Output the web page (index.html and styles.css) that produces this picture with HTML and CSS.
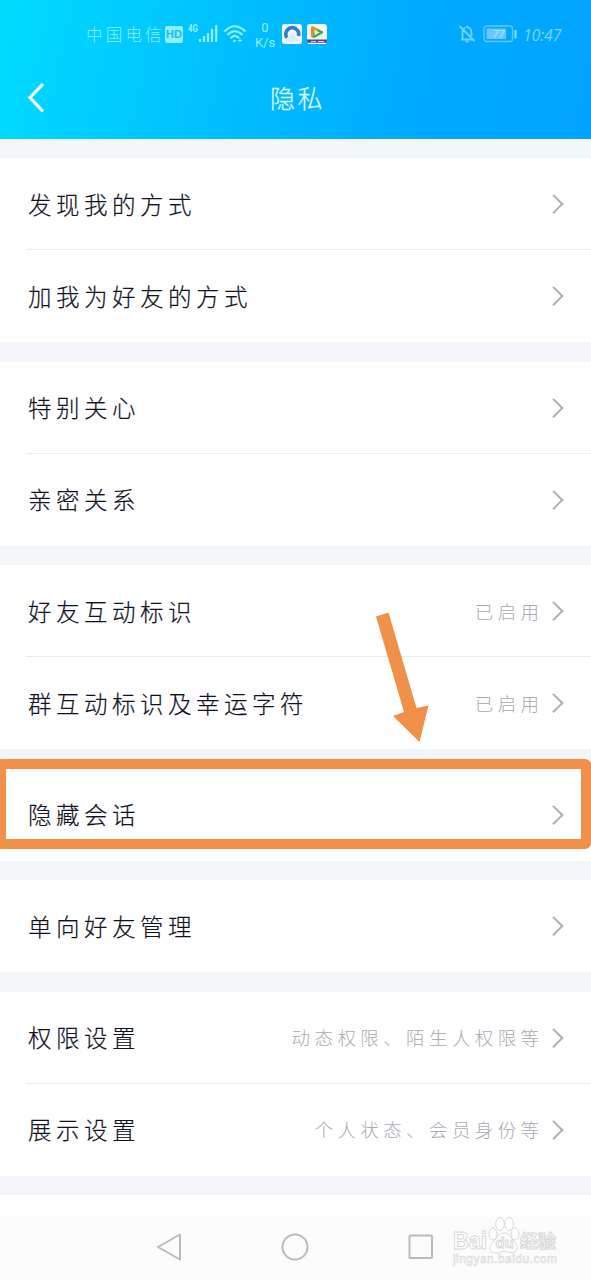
FILE: index.html
```html
<!DOCTYPE html>
<html lang="zh-CN">
<head>
<meta charset="utf-8">
<title>隐私</title>
<link rel="stylesheet" href="styles.css">
</head>
<body>
<div class="screen">
  <header class="header">
    <div class="status">
      <span class="carrier">中国电信</span>
      <span class="hd">HD</span>
      <svg class="net" width="14" height="16" viewBox="0 0 14 16"><text x="1" y="11" class="net-text" textLength="10" lengthAdjust="spacingAndGlyphs">4G</text></svg>
      <svg class="signal" width="20" height="19" viewBox="0 0 20 19" stroke="#8ff1fd" stroke-width="2.2" fill="none"><path d="M2 15v3M6 12v6M10 9v9M14 5v13M18.200 1v17"/></svg>
      <svg class="wifi" width="24" height="20" viewBox="0 0 24 20" fill="none" stroke="#8ff1fd" stroke-width="2.200"><path d="M1.500 7.500Q11.500-3 22.500 7.500M4.500 11Q11.500 3.500 19.500 11M7.500 14.500Q12 9.500 16 14"/><circle cx="11.500" cy="17" r="1.300" fill="#8ff1fd" stroke="none"/><path d="M15 16.500h4M17 14.500v4" stroke-width="1"/></svg>
      <span class="speed"><span>0</span><span>K/s</span></span>
      <svg class="app" width="20" height="20" viewBox="0 0 20 20"><rect width="20" height="20" rx="3" fill="#f1f7fe"/><path d="M5 14A6.500 6.500 0 1 1 16.500 12" fill="none" stroke="#2f7fd6" stroke-width="3.600"/><path d="M4 17.500Q3.500 13 7.500 13Q9 8.500 12.500 11.500Q13 14 16.500 14.500V17.500Z" fill="#dcecfb"/></svg>
      <svg class="app app-video" width="20" height="20" viewBox="0 0 20 20"><rect width="20" height="20" rx="3" fill="#f4f7f4"/><path d="M4 3.500Q4 2 6 2.500L15.500 7.200Q17 8.300 15.500 9.500L8 13.500Q4 14.500 4 11Z" fill="#39a852"/><path d="M4 3.500Q4 2 6 2.500L12 5.500L7 7L6 13.500Q4 13 4 11Z" fill="#f28b2c"/><path d="M7.500 5.500L12.500 8.500L7.500 11.500Z" fill="#f7f3c8"/><path d="M0 15.500H20V17Q20 20 17 20H3Q0 20 0 17Z" fill="#5145a5"/><path d="M1 19.500H19" stroke="#fff" stroke-width="1.500"/><path d="M4 17.500H9M11 17.500H17" stroke="#f4b8d8" stroke-width="1.200"/></svg>
      <svg class="bell" width="18" height="20" viewBox="0 0 18 20" fill="none" stroke="#75d4ff" stroke-width="1.800"><path d="M3 15.500H15.500M4.500 15V8.500Q4.800 5 7 4M8 3.500Q9 2 10 3.500Q13.500 4.500 13.500 8.500V12M1.500 2L16.500 17"/><path d="M7.500 17.500h3"/></svg>
      <svg class="cell" width="35" height="18" viewBox="0 0 35 18"><rect x="1" y="1" width="28.500" height="15.500" rx="2.500" fill="none" stroke="#62c8ff" stroke-width="1.300"/><rect x="3.500" y="3.500" width="19.500" height="10.500" fill="#66c8ff"/><path d="M32.500 5v8.500" stroke="#8adcff" stroke-width="2.200"/><text x="9.500" y="13" class="cell-text">77</text></svg>
      <span class="clock">10:47</span>
    </div>
    <div class="titlebar">
      <svg class="back" width="18" height="32" viewBox="0 0 18 32" fill="none" stroke="#fff" stroke-width="3.200"><path d="M16 2L3 15.500L16 29.500"/></svg>
      <h1 class="title">隐私</h1>
    </div>
  </header>

  <main class="list">
    <section class="group">
      <div class="row"><span class="label">发现我的方式</span><i class="chevron"></i></div>
      <div class="row"><span class="label">加我为好友的方式</span><i class="chevron"></i></div>
    </section>
    <section class="group">
      <div class="row"><span class="label">特别关心</span><i class="chevron"></i></div>
      <div class="row"><span class="label">亲密关系</span><i class="chevron"></i></div>
    </section>
    <section class="group">
      <div class="row"><span class="label">好友互动标识</span><span class="value">已启用</span><i class="chevron"></i></div>
      <div class="row"><span class="label">群互动标识及幸运字符</span><span class="value">已启用</span><i class="chevron"></i></div>
    </section>
    <section class="group marked">
      <div class="row"><span class="label">隐藏会话</span><i class="chevron"></i></div>
      <svg class="arrow" width="54" height="130" viewBox="0 0 54 130"><path d="M1 4.500L13.500 .5L41.500 96L53.500 93.500L44.500 130L18 104L29 100Z" fill="#f19149"/></svg>
      <div class="highlight"></div>
    </section>
    <section class="group">
      <div class="row"><span class="label">单向好友管理</span><i class="chevron"></i></div>
    </section>
    <section class="group">
      <div class="row"><span class="label">权限设置</span><span class="value">动态权限、陌生人权限等</span><i class="chevron"></i></div>
      <div class="row"><span class="label">展示设置</span><span class="value">个人状态、会员身份等</span><i class="chevron"></i></div>
    </section>
    <section class="group tail"></section>
  </main>

  <nav class="nav">
    <svg width="26" height="30" viewBox="0 0 26 30" fill="none" stroke="#bbb" stroke-width="2" stroke-linejoin="round"><path d="M24 2.500V27.500L2 15Z"/></svg>
    <svg width="28" height="28" viewBox="0 0 28 28" fill="none" stroke="#bbb" stroke-width="2"><circle cx="14" cy="14" r="12.500"/></svg>
    <svg width="26" height="26" viewBox="0 0 26 26" fill="none" stroke="#bbb" stroke-width="2"><rect x="1.500" y="1.500" width="22.500" height="22.500" rx="1"/></svg>
    <svg class="watermark" width="112" height="56" viewBox="0 0 112 56">
      <g class="mark">
        <text x="2" y="34" class="mark-latin" textLength="34" lengthAdjust="spacingAndGlyphs">Bai</text>
        <ellipse cx="42" cy="19" rx="4" ry="6"/><ellipse cx="49" cy="9" rx="4.300" ry="6.500"/><ellipse cx="58" cy="9" rx="4.300" ry="6.500"/><ellipse cx="64" cy="19" rx="4" ry="6"/>
        <path d="M53 18C47 18 47 23 42 27C36 32 39 38 45 38C49 38 50 36 53 36C56 36 58 38 62 37.500C68 36 67 30 63 26C59 22 58 18 53 18Z"/>
        <text x="44.500" y="33" class="mark-du">du</text>
        <text x="69" y="33" class="mark-cjk" textLength="36">经验</text>
        <text x="2" y="48" class="mark-url" textLength="104">jingyan.baidu.com</text>
      </g>
    </svg>
  </nav>
</div>
</body>
</html>
```

FILE: styles.css
```css
* { box-sizing: border-box; }
body {
  margin: 0;
  font-family: "Noto Sans CJK SC", sans-serif;
  background: #f4f6fa;
}
.screen {
  width: 591px;
  height: 1280px;
  overflow: hidden;
  display: flex;
  flex-direction: column;
}
.header {
  flex: none;
  height: 138.5px;
  background: linear-gradient(102deg, #00dcff 0%, #00c3ff 33%, #00aaff 70%, #00a4ff 100%);
}
.status {
  height: 58px;
  padding: 11px 0 0 86px;
  display: flex;
  align-items: center;
  color: #8ff1fd;
  line-height: 1;
}
.carrier {
  width: 79px;
  font-size: 16.5px;
  font-weight: 300;
  letter-spacing: 3.2px;
  white-space: nowrap;
}
.hd {
  width: 18px;
  height: 17px;
  border-radius: 2px;
  background: #8ff1fd;
  color: #14bdee;
  font: bold 11px/17px "Liberation Sans", sans-serif;
  text-align: center;
}
.net { margin: -11px 0 0 4px; }
.net-text { font: bold 10px Roboto, sans-serif; fill: #8ff1fd; }
.signal { margin: 0 0 2px -3px; }
.wifi { margin: 0 0 2px 5px; }
.speed {
  width: 22px;
  margin: 0 0 0 7px;
  display: flex;
  flex-direction: column;
  align-items: center;
  font: 13px/15px Roboto, sans-serif;
}
.app { margin: 0 0 1px 6px; }
.app-video { margin-left: 5px; }
.bell { margin: 0 0 1px 131px; }
.cell { margin: 0 0 1px 7px; }
.cell-text { font: italic 11px "Open Sans", sans-serif; fill: #b8eaff; }
.clock {
  margin-left: 5px;
  color: #80d6ff;
  font: italic 16px/20px "Open Sans", sans-serif;
  letter-spacing: -.2px;
}
.titlebar {
  height: 80px;
  display: grid;
  grid-template-columns: 270px auto;
  align-items: center;
}
.back { margin: 0 0 1px 27px; }
.title {
  margin: -3px 0 0;
  color: #ddfbff;
  font-size: 25px;
  font-weight: 300;
  letter-spacing: 2.5px;
  line-height: 30px;
  -webkit-text-stroke: .3px #ddfbff;
}
.list {
  flex: none;
  height: 1076px;
  padding-top: 19.6px;
  display: flex;
  flex-direction: column;
  gap: 19.5px;
}
.group { background: #fff; }
.tail { flex: 1; }
.row {
  position: relative;
  height: 92px;
  padding: 0 28px;
  display: flex;
  align-items: center;
}
.row + .row::before {
  content: "";
  position: absolute;
  top: -1px;
  left: 26px;
  right: 0;
  height: 1px;
  background: #ebecef;
}
.label {
  flex: 1;
  margin-top: -1px;
  color: #10121f;
  font-size: 23.5px;
  font-weight: 300;
  letter-spacing: 4.5px;
  line-height: 34px;
  -webkit-text-stroke: .2px #10121f;
}
.value {
  margin: -1px 3px 0 0;
  color: #a8aab4;
  font-size: 18.5px;
  font-weight: 300;
  letter-spacing: 4.4px;
  line-height: 28px;
}
.chevron {
  width: 13.5px;
  height: 13.5px;
  margin-right: 3px;
  border-top: 2px solid #adafb5;
  border-right: 2px solid #adafb5;
  transform: rotate(45deg);
}
.marked { position: relative; }
.highlight {
  position: absolute;
  top: -10px;
  left: -4px;
  width: 595px;
  height: 90px;
  border: 10px solid #f19149;
  border-radius: 6px;
}
.arrow {
  position: absolute;
  top: -157px;
  left: 375px;
}
.nav {
  position: relative;
  flex: 1;
  display: grid;
  grid-template-columns: 26px 28px 26px;
  column-gap: 99px;
  align-items: center;
  padding: 0 0 1px 156px;
  background: #fcfcfc;
}
.watermark {
  position: absolute;
  top: 0;
  left: 451px;
}
.mark { fill: #fff; stroke: #d8d8d8; stroke-width: 1; }
.mark-latin { font: bold 24px "Liberation Sans", sans-serif; }
.mark-du { font: bold 15px "Liberation Sans", sans-serif; }
.mark-cjk { font: bold 18px "Noto Sans CJK SC", sans-serif; }
.mark-url { font: 12px "Liberation Sans", sans-serif; stroke-width: .6px; }
```
